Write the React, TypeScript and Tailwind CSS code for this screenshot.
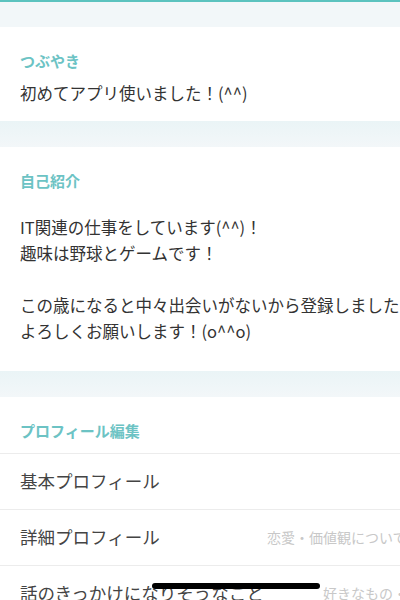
import React from "react";

const font = { fontFamily: '"Noto Sans CJK JP", "Noto Sans", sans-serif' };

function Band() {
  return <div className="h-[26px] bg-gradient-to-b from-[#eaf4f6] to-[#f3f7f9]" />;
}

function Label({ children }: { children: React.ReactNode }) {
  return (
    <div className="h-[20px] text-[15px] leading-[20px] font-bold text-[#6cc3c4]">{children}</div>
  );
}

const rows = [
  { title: "基本プロフィール", sub: "", subW: "" },
  { title: "詳細プロフィール", sub: "恋愛・価値観について", subW: "w-[133px]" },
  { title: "話のきっかけになりそうなこと", sub: "好きなもの・趣味", subW: "w-[77px]" },
];

export default function App() {
  return (
    <div className="relative w-[400px] h-[600px] overflow-hidden bg-white text-[#333]" style={font}>
      <div className="h-[2px] bg-[#5cc3bf]" />
      <div className="h-[25px] bg-[#f2f7f9]" />

      <section className="pt-[24px] pb-[15px] px-5 bg-white">
        <Label>つぶやき</Label>
        <p className="mt-[9px] text-[16.5px] leading-[26px]">初めてアプリ使いました！(^^)</p>
      </section>

      <Band />

      <section className="pt-[24px] pb-[27px] pl-5 bg-white">
        <Label>自己紹介</Label>
        <p className="mt-[23px] text-[16.5px] leading-[26px] whitespace-pre overflow-hidden">
          {"IT関連の仕事をしています(^^)！\n趣味は野球とゲームです！\n\nこの歳になると中々出会いがないから登録しました！\nよろしくお願いします！(o^^o)"}
        </p>
      </section>

      <Band />

      <section className="bg-white">
        <div className="h-[56px] pt-[24px] px-5">
          <Label>プロフィール編集</Label>
        </div>
        {rows.map((r) => (
          <div
            key={r.title}
            className="h-[56px] flex items-center border-t border-[#ececec] pl-5 whitespace-nowrap overflow-hidden"
          >
            <span className="text-[17.5px] text-[#444]">{r.title}</span>
            {r.sub && (
              <span className={`ml-auto shrink-0 overflow-hidden text-[14px] text-[#c8c8c8] ${r.subW}`}>
                {r.sub}
              </span>
            )}
          </div>
        ))}
      </section>

      <div className="absolute left-[152px] bottom-[11px] w-[168px] h-[6px] rounded-full bg-black" />
    </div>
  );
}
